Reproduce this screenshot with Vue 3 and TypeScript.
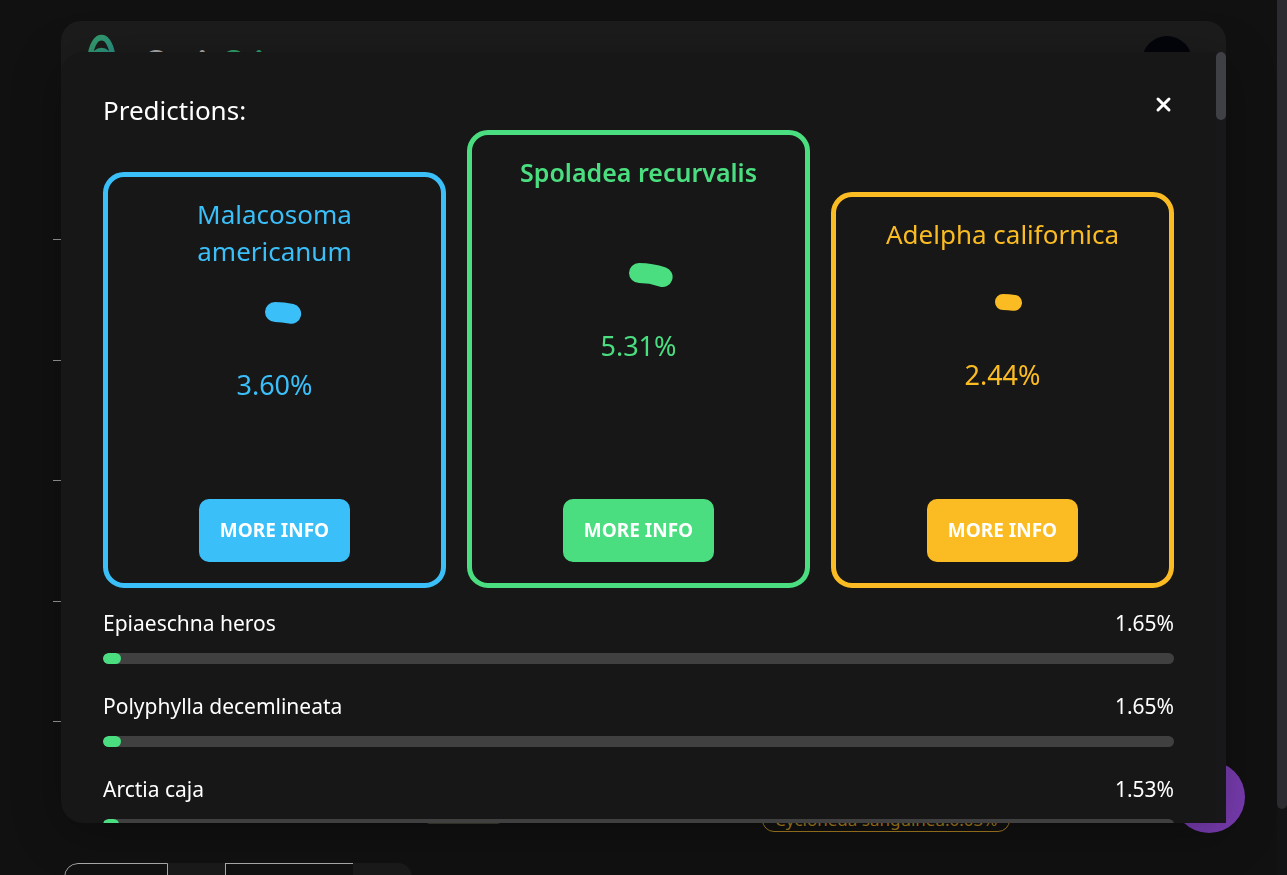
<script setup lang="ts">
interface TopPrediction {
  name: string
  value: number
  tone: 'second' | 'first' | 'third'
  stroke: number
}

interface Prediction {
  name: string
  value: number
}

const podium: TopPrediction[] = [
  { name: 'Malacosoma americanum', value: 3.6, tone: 'second', stroke: 20 },
  { name: 'Spoladea recurvalis', value: 5.31, tone: 'first', stroke: 20 },
  { name: 'Adelpha californica', value: 2.44, tone: 'third', stroke: 16 },
]

const others: Prediction[] = [
  { name: 'Epiaeschna heros', value: 1.65 },
  { name: 'Polyphylla decemlineata', value: 1.65 },
  { name: 'Arctia caja', value: 1.53 },
]

const ticks = [1, 2, 3, 4, 5]

const percent = (value: number): string => `${value.toFixed(2)}%`

// Arc on a ring of radius 72 centred in a 164 x 164 box, clockwise from the top.
const arc = (value: number): string => {
  const angle = (value / 100) * Math.PI * 2
  const x = 82 + 72 * Math.sin(angle)
  const y = 82 - 72 * Math.cos(angle)
  return `M82 10A72 72 0 0 1 ${x} ${y}`
}
</script>

<template>
  <div class="page">
    <div class="backdrop-page" aria-hidden="true">
      <header class="site-header">
        <svg class="logo" viewBox="0 0 30 40">
          <defs>
            <linearGradient id="logo-fill" x1="0" y1="0" x2="1" y2="1">
              <stop offset="0" stop-color="#36a067" />
              <stop offset="1" stop-color="#258a91" />
            </linearGradient>
          </defs>
          <path
            fill="url(#logo-fill)"
            fill-rule="evenodd"
            d="M15 0C22 0 27 8 29 19L30 40H0L1 19C3 8 8 0 15 0ZM15 6C11 6 9 11 7 17Q15 10 23 17C21 11 19 6 15 6Z"
          />
        </svg>
        <span class="brand">Cosis<span class="brand-accent">Cri</span></span>
        <span class="avatar"></span>
      </header>
      <div class="axis">
        <span v-for="tick in ticks" :key="tick" class="tick"></span>
      </div>
      <div class="tags">
        <span class="thumb"></span>
        <span class="tag">Cycloneda sanguinea:0.03%</span>
      </div>
      <div class="table-head">
        <span class="cell outlined first-cell"></span>
        <span class="cell narrow"></span>
        <span class="cell outlined wide"></span>
        <span class="cell last-cell"></span>
      </div>
      <span class="fab"></span>
      <span class="page-track"><span class="page-thumb"></span></span>
    </div>

    <div class="overlay">
      <section class="modal" role="dialog" aria-labelledby="modal-title">
        <div class="content">
          <header class="modal-header">
            <h2 id="modal-title">Predictions:</h2>
            <button type="button" class="close" aria-label="Close">
              <svg viewBox="0 0 22 24">
                <path d="M6 7L17 18M17 7L6 18" />
              </svg>
            </button>
          </header>

          <div class="podium">
            <article v-for="item in podium" :key="item.name" class="card" :class="item.tone">
              <h3>{{ item.name }}</h3>
              <div class="ring">
                <svg viewBox="0 0 164 164">
                  <path :d="arc(item.value)" :stroke-width="item.stroke" />
                </svg>
                <span>{{ percent(item.value) }}</span>
              </div>
              <button type="button" class="more">MORE INFO</button>
            </article>
          </div>

          <ul class="others">
            <li v-for="item in others" :key="item.name">
              <div class="line">
                <span>{{ item.name }}</span>
                <span class="amount">{{ percent(item.value) }}</span>
              </div>
              <div class="bar">
                <div class="fill" :style="{ width: item.value + '%' }"></div>
              </div>
            </li>
          </ul>
        </div>
        <div class="track"><span class="thumb-bar"></span></div>
      </section>
    </div>
  </div>
</template>

<style>
body {
  background: #111;
}
</style>

<style scoped>
* {
  box-sizing: border-box;
}

.page {
  height: 100vh;
  overflow: hidden;
  font-family: "Noto Sans", "Open Sans", sans-serif;
  color: #fff;
  background: #111;
}

.site-header {
  display: flex;
  align-items: flex-start;
  height: 84px;
  margin: 21px 61px 0;
  padding: 13px 34px 0 26px;
  border-radius: 20px;
  background: #1c1c1c;
}

.logo {
  width: 29px;
  height: 40px;
}

.brand {
  margin: 6px 0 0 27px;
  color: #aaa;
  font-family: Lato, sans-serif;
  font-size: 33px;
  font-weight: 700;
  line-height: 42px;
}

.brand-accent {
  color: #2fa36b;
}

.avatar {
  width: 50px;
  height: 50px;
  margin: 2px 0 0 auto;
  border-radius: 50%;
  background: #04050a;
}

.axis {
  display: flex;
  flex-direction: column;
  justify-content: space-between;
  height: 483px;
  margin: 134px 0 0 53px;
}

.tick {
  width: 9px;
  height: 1px;
  background: #999;
}

.tags {
  display: flex;
  align-items: flex-end;
  height: 24px;
  margin: 86px 0 0 426px;
}

.thumb {
  width: 75px;
  height: 16px;
  margin-bottom: 8px;
  border-radius: 4px;
  background: #3c3b30;
}

.tag {
  margin-left: 261px;
  padding: 0 12px;
  border: 1px solid #a87e1e;
  border-radius: 12px;
  color: #a87e1e;
  font-size: 17px;
  line-height: 22px;
}

.table-head {
  display: flex;
  width: 348px;
  height: 60px;
  margin: 31px 0 0 64px;
  overflow: hidden;
  border-radius: 14px;
  background: #1a1a1a;
}

.cell {
  flex: 1;
}

.narrow {
  flex: 0 0 57px;
}

.wide {
  flex: 0 0 128px;
}

.first-cell {
  flex: 0 0 104px;
  border-radius: 14px 0 0;
}

.outlined {
  border: 1px solid #aaa;
  background: #111;
}

.wide.outlined {
  border-right: 0;
}

.fab {
  position: fixed;
  right: 42px;
  bottom: 42px;
  width: 72px;
  height: 72px;
  border-radius: 50%;
  background: #7a3db2;
}

.page-track {
  position: fixed;
  inset: 0 0 0 auto;
  width: 10px;
  background: #131315;
}

.page-thumb {
  display: block;
  height: 809px;
  border-radius: 0 0 5px 5px;
  background: #2c2b30;
}

.overlay {
  position: fixed;
  inset: 0;
  display: flex;
  padding: 52px 61px;
}

.modal {
  display: flex;
  flex: 1;
  overflow: hidden;
  border-radius: 22px 0 0 22px;
  background: #171717;
  box-shadow: 0 10px 50px rgba(0, 0, 0, 0.3);
}

.content {
  flex: 1;
  padding: 40px 42px 0;
}

.track {
  width: 10px;
  background: #18181a;
}

.thumb-bar {
  display: block;
  height: 68px;
  border-radius: 5px;
  background: #3f3f46;
}

.modal-header {
  display: flex;
  justify-content: space-between;
  align-items: flex-start;
}

h2,
h3 {
  margin: 0;
  font-size: 26px;
  font-weight: 400;
}

h2 {
  padding-bottom: 2px;
  line-height: 36px;
}

.close {
  width: 22px;
  height: 24px;
  padding: 0;
  border: 0;
  background: none;
}

.close svg {
  display: block;
  fill: none;
  stroke: #fff;
  stroke-width: 3;
  stroke-linecap: round;
}

.podium {
  display: grid;
  grid-template-columns: repeat(3, 1fr);
  align-items: end;
  gap: 21px;
}

.card {
  display: flex;
  flex-direction: column;
  align-items: center;
  padding: 19px 21px 21px;
  border: 5px solid var(--tone);
  border-radius: 21px;
  color: var(--tone);
  text-align: center;
}

.second {
  --tone: #3bbff9;
  min-height: 416px;
}

.first {
  --tone: #4ade80;
  min-height: 458px;
}

.third {
  --tone: #fbbc23;
  min-height: 396px;
}

h3 {
  max-width: 250px;
  line-height: 37px;
}

.first h3 {
  min-height: 77px;
  font-size: 25px;
  font-weight: 600;
}

.third h3 {
  min-height: 44px;
}

.ring {
  display: grid;
  place-items: center;
  margin-top: 32px;
  font-size: 27px;
  line-height: 37px;
}

.ring > * {
  grid-area: 1 / 1;
}

.ring svg {
  width: 164px;
  height: 164px;
  fill: none;
  stroke: var(--tone);
  stroke-linecap: round;
}

.more {
  width: 151px;
  height: 63px;
  margin-top: auto;
  padding: 0 0 2px;
  border: 0;
  border-radius: 10px;
  background: var(--tone);
  color: #fff;
  font-family: inherit;
  font-size: 19px;
  font-weight: 700;
}

.others {
  display: grid;
  gap: 28px;
  margin: 21px 0 0;
  padding: 0;
  list-style: none;
}

.line {
  display: flex;
  justify-content: space-between;
  margin-bottom: 16px;
  font-size: 21px;
  line-height: 28px;
}

.bar {
  height: 11px;
  overflow: hidden;
  border-radius: 6px;
  background: #404040;
}

.fill {
  height: 100%;
  border-radius: 6px;
  background: #4ade80;
}
</style>
